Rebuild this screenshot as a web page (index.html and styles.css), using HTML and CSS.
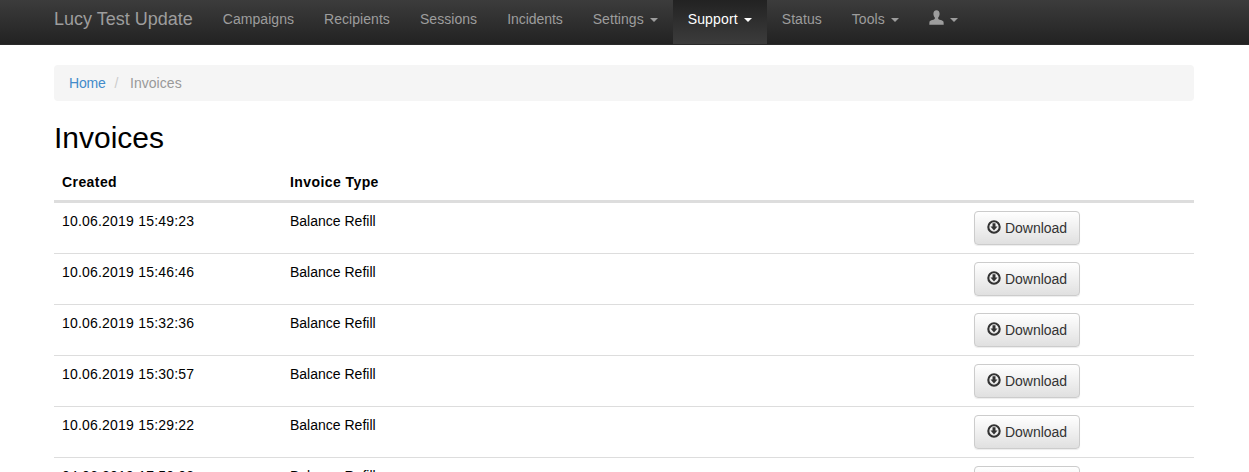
FILE: index.html
```html
<!DOCTYPE html>
<html lang="en">
<head>
<meta charset="utf-8">
<title>Invoices</title>
<link rel="stylesheet" href="styles.css">
</head>
<body>
<nav class="navbar">
  <div class="container nav-inner">
    <a class="brand">Lucy Test Update</a>
    <ul class="nav">
      <li><a>Campaigns</a></li>
      <li><a>Recipients</a></li>
      <li><a>Sessions</a></li>
      <li class="tight"><a>Incidents</a></li>
      <li><a>Settings <b class="caret"></b></a></li>
      <li class="active"><a>Support <b class="caret"></b></a></li>
      <li><a>Status</a></li>
      <li><a>Tools <b class="caret"></b></a></li>
      <li><a><svg class="user-icon" viewBox="0 0 16 16" aria-hidden="true"><path d="M8 .3C5.700.3 4.700 2 4.700 4.100c0 1.500.5 3 1.500 4v1.300C6.200 10.400 1 10.800.5 12.600L.3 15.700h15.400l-.2-3.100c-.5-1.800-5.700-2.200-5.700-3.200V8.100c1-1 1.500-2.500 1.500-4C11.300 2 10.300.3 8 .3z"/></svg> <b class="caret"></b></a></li>
    </ul>
  </div>
</nav>
<main class="container">
  <ol class="breadcrumb">
    <li class="home"><a>Home</a></li>
    <li class="sep">/</li>
    <li class="current">Invoices</li>
  </ol>
  <h1>Invoices</h1>
  <table class="table">
    <thead>
      <tr><th class="col-created">Created</th><th class="col-type">Invoice Type</th><th class="col-action"></th></tr>
    </thead>
    <tbody>
      <tr><td class="date">10.06.2019 15:49:23</td><td>Balance Refill</td><td><a class="btn"><svg class="dl-icon" viewBox="0 0 16 16" aria-hidden="true"><path fill-rule="evenodd" d="M8 .3a7.700 7.700 0 1 0 0 15.400A7.700 7.700 0 0 0 8 .3zM8 2.700a5.300 5.300 0 1 1 0 10.600A5.300 5.300 0 0 1 8 2.700zM6.300 3.800v3.700H4l4 4.400 4-4.400H9.700V3.800z"/></svg> Download</a></td></tr>
      <tr><td class="date">10.06.2019 15:46:46</td><td>Balance Refill</td><td><a class="btn"><svg class="dl-icon" viewBox="0 0 16 16" aria-hidden="true"><path fill-rule="evenodd" d="M8 .3a7.700 7.700 0 1 0 0 15.400A7.700 7.700 0 0 0 8 .3zM8 2.700a5.300 5.300 0 1 1 0 10.600A5.300 5.300 0 0 1 8 2.700zM6.300 3.800v3.700H4l4 4.400 4-4.400H9.700V3.800z"/></svg> Download</a></td></tr>
      <tr><td class="date">10.06.2019 15:32:36</td><td>Balance Refill</td><td><a class="btn"><svg class="dl-icon" viewBox="0 0 16 16" aria-hidden="true"><path fill-rule="evenodd" d="M8 .3a7.700 7.700 0 1 0 0 15.400A7.700 7.700 0 0 0 8 .3zM8 2.700a5.300 5.300 0 1 1 0 10.600A5.300 5.300 0 0 1 8 2.700zM6.300 3.800v3.700H4l4 4.400 4-4.400H9.700V3.800z"/></svg> Download</a></td></tr>
      <tr><td class="date">10.06.2019 15:30:57</td><td>Balance Refill</td><td><a class="btn"><svg class="dl-icon" viewBox="0 0 16 16" aria-hidden="true"><path fill-rule="evenodd" d="M8 .3a7.700 7.700 0 1 0 0 15.400A7.700 7.700 0 0 0 8 .3zM8 2.700a5.300 5.300 0 1 1 0 10.600A5.300 5.300 0 0 1 8 2.700zM6.300 3.800v3.700H4l4 4.400 4-4.400H9.700V3.800z"/></svg> Download</a></td></tr>
      <tr><td class="date">10.06.2019 15:29:22</td><td>Balance Refill</td><td><a class="btn"><svg class="dl-icon" viewBox="0 0 16 16" aria-hidden="true"><path fill-rule="evenodd" d="M8 .3a7.700 7.700 0 1 0 0 15.400A7.700 7.700 0 0 0 8 .3zM8 2.700a5.300 5.300 0 1 1 0 10.600A5.300 5.300 0 0 1 8 2.700zM6.300 3.800v3.700H4l4 4.400 4-4.400H9.700V3.800z"/></svg> Download</a></td></tr>
      <tr><td class="date">04.06.2019 17:50:08</td><td>Balance Refill</td><td><a class="btn"><svg class="dl-icon" viewBox="0 0 16 16" aria-hidden="true"><path fill-rule="evenodd" d="M8 .3a7.700 7.700 0 1 0 0 15.400A7.700 7.700 0 0 0 8 .3zM8 2.700a5.300 5.300 0 1 1 0 10.600A5.300 5.300 0 0 1 8 2.700zM6.300 3.800v3.700H4l4 4.400 4-4.400H9.700V3.800z"/></svg> Download</a></td></tr>
    </tbody>
  </table>
</main>
</body>
</html>
```
FILE: styles.css
```css
* { box-sizing: border-box; }
html, body { height: 472px; overflow: hidden; }
body {
  margin: 0;
  font-family: "Liberation Sans", Arial, sans-serif;
  font-size: 14px;
  line-height: 20px;
  color: #000;
  background: #fff;
}
.container { width: 1170px; margin: 0 0 0 39px; padding: 0 15px; }
.navbar {
  height: 45px;
  background: linear-gradient(to bottom, #3c3c3c 0%, #222 100%);
  border-bottom: 1px solid #2a2a2a;
  margin-bottom: 20px;
}
.nav-inner { display: flex; }
.brand {
  font-size: 18px;
  line-height: 20px;
  padding: 9px 15px 15px 0;
  color: #9d9d9d;
}
.nav { display: flex; list-style: none; margin: 0; padding: 0; letter-spacing: .05px; }
.nav .tight { letter-spacing: -.05px; }
.nav a {
  display: block;
  height: 44px;
  padding: 9px 15px;
  color: #9d9d9d;
}
.nav .active { letter-spacing: .15px; }
.nav .active a {
  color: #fff;
  background: linear-gradient(to bottom, #222 0%, #3c3c3c 100%);
}
.caret {
  display: inline-block;
  width: 0;
  height: 0;
  margin-left: 2px;
  vertical-align: middle;
  border-top: 4px solid currentColor;
  border-left: 4px solid transparent;
  border-right: 4px solid transparent;
}
.user-icon { width: 15px; height: 15px; fill: currentColor; vertical-align: -1px; }
.breadcrumb {
  display: flex;
  list-style: none;
  margin: 0 0 20px;
  padding: 8px 15px;
  height: 36px;
  background: #f5f5f5;
  border-radius: 4px;
}
.breadcrumb a { color: #428bca; }
.home { letter-spacing: -.2px; }
.sep { color: #ccc; padding: 0 9px; }
.current { color: #999; padding-left: 2.500px; letter-spacing: .05px; }
h1 {
  font-size: 30px;
  font-weight: 400;
  line-height: 33px;
  margin: 0 0 10px;
  color: #000;
}
.table { width: 1140px; border-collapse: collapse; table-layout: fixed; }
.col-created { width: 228px; }
.col-type { width: 684px; }
.col-action { width: 228px; }
th {
  text-align: left;
  font-weight: 700;
  letter-spacing: .42px;
  padding: 6px 8px 8px;
  height: 37px;
  border-bottom: 3px solid #ddd;
  vertical-align: bottom;
}
td {
  padding: 8px;
  vertical-align: top;
  border-bottom: 1px solid #ddd;
  height: 51px;
}
.date { letter-spacing: .2px; }
.btn {
  display: inline-block;
  height: 34px;
  padding: 6px 12px;
  color: #333;
  border: 1px solid #ccc;
  border-radius: 4px;
  background: linear-gradient(to bottom, #fff 0%, #e0e0e0 100%);
  box-shadow: inset 0 1px 0 rgba(255,255,255,.15), 0 1px 1px rgba(0,0,0,.075);
  white-space: nowrap;
}
.dl-icon { width: 14px; height: 14px; fill: #333; vertical-align: -1.500px; }
```
